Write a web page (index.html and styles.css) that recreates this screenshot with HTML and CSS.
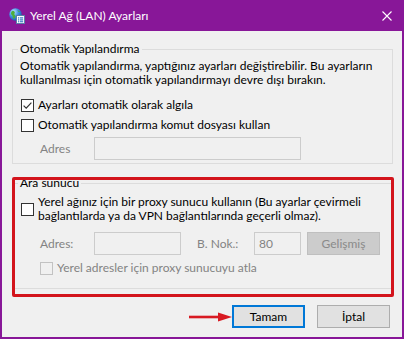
FILE: index.html
```html
<!DOCTYPE html>
<html lang="tr">
<head>
<meta charset="utf-8">
<title>Yerel Ağ (LAN) Ayarları</title>
<link rel="stylesheet" href="styles.css">
</head>
<body>
<div class="window">
  <div class="titlebar">
    <svg class="app-icon" viewBox="0 0 16 16" aria-hidden="true">
      <defs>
        <radialGradient id="gl" cx="0.35" cy="0.3" r="0.8">
          <stop offset="0" stop-color="#bfe6ff"/>
          <stop offset="0.5" stop-color="#3d8fe0"/>
          <stop offset="1" stop-color="#164f9e"/>
        </radialGradient>
      </defs>
      <circle cx="6.5" cy="6.5" r="6.2" fill="url(#gl)"/>
      <path d="M3 3.2c1.2-.6 2.4-.2 2.8.8.3.9-.6 1.4-.4 2.4.2.9 1.3 1 1.1 2.1-.2.9-1 1.6-1.6 2.4-.9-.4-1.3-1.4-1.2-2.4.1-.9-.8-1.3-1.4-2C1.7 5.6 2.2 3.7 3 3.2z" fill="#4caf3a"/>
      <path d="M8.5 2.2c1 .2 2 .9 2.6 1.8-.6.3-1.4 0-1.8-.5-.3-.4-.8-.6-.8-1.3z" fill="#4caf3a"/>
      <rect x="7.5" y="7.5" width="8" height="8" fill="#ffffff" stroke="#5a7fa8" stroke-width="1"/>
      <rect x="9" y="9.3" width="1.3" height="1.2" fill="#2a6fc4"/>
      <rect x="11" y="9.3" width="3.2" height="1.2" fill="#2a6fc4"/>
      <rect x="9" y="11.3" width="1.3" height="1.2" fill="#2a6fc4"/>
      <rect x="11" y="11.3" width="3.2" height="1.2" fill="#2a6fc4"/>
      <rect x="9" y="13.2" width="1.3" height="1.1" fill="#2a6fc4"/>
      <rect x="11" y="13.2" width="3.2" height="1.1" fill="#2a6fc4"/>
    </svg>
    <span class="title">Yerel Ağ (LAN) Ayarları</span>
    <svg class="close" viewBox="0 0 10 10" aria-hidden="true">
      <path d="M0.5 0.5L9.5 9.5M9.5 0.5L0.5 9.5" stroke="#ffffff" stroke-width="1.1" fill="none"/>
    </svg>
  </div>
  <div class="client">
    <fieldset class="group g1">
      <legend>Otomatik Yapılandırma</legend>
      <p class="desc">Otomatik yapılandırma, yaptığınız ayarları değiştirebilir. Bu ayarların<br>kullanılması için otomatik yapılandırmayı devre dışı bırakın.</p>
      <label class="check first">
        <span class="box">
          <svg viewBox="0 0 11 11" aria-hidden="true"><path d="M1.6 5.6L4.2 8.2L9.4 2.6" stroke="#333" stroke-width="1.2" fill="none"/></svg>
        </span>
        <span>Ayarları otomatik olarak algıla</span>
      </label>
      <label class="check">
        <span class="box"></span>
        <span>Otomatik yapılandırma komut dosyası kullan</span>
      </label>
      <div class="field-row">
        <span class="lbl lbl-addr">Adres</span>
        <span class="input input-script"></span>
      </div>
    </fieldset>

    <fieldset class="group g2">
      <legend>Ara sunucu</legend>
      <label class="check multi">
        <span class="box"></span>
        <span>Yerel ağınız için bir proxy sunucu kullanın (Bu ayarlar çevirmeli<br>bağlantılarda ya da VPN bağlantılarında geçerli olmaz).</span>
      </label>
      <div class="field-row proxy-row">
        <span class="lbl lbl-addr">Adres:</span>
        <span class="input input-proxy"></span>
        <span class="lbl lbl-port">B. Nok.:</span>
        <span class="input input-port">80</span>
        <span class="btn btn-disabled">Gelişmiş</span>
      </div>
      <label class="check disabled">
        <span class="box"></span>
        <span>Yerel adresler için proxy sunucuyu atla</span>
      </label>
    </fieldset>

    <div class="buttons">
      <span class="btn btn-default">Tamam</span>
      <span class="btn">İptal</span>
    </div>

    <div class="highlight"></div>
    <svg class="arrow" viewBox="0 0 44 12" aria-hidden="true">
      <path d="M0 6H32" stroke="#d81a22" stroke-width="2.6"/>
      <path d="M29 1.5L43 6L29 10.5Z" fill="#d81a22"/>
    </svg>
  </div>
</div>
</body>
</html>
```

FILE: styles.css
```css
* { box-sizing: border-box; }

html, body {
  margin: 0;
  padding: 0;
}

body {
  width: 404px;
  height: 340px;
  overflow: hidden;
  background: #ffffff;
  font-family: Lato, "Liberation Sans", sans-serif;
  font-size: 12px;
  line-height: 14px;
  color: #000000;
  white-space: nowrap;
}

.window {
  width: 404px;
  height: 339px;
  display: flex;
  flex-direction: column;
  background: #881798;
}

.titlebar {
  height: 31px;
  flex: none;
  display: flex;
  align-items: center;
  padding-left: 9px;
  color: #ffffff;
}

.app-icon {
  width: 16px;
  height: 16px;
  margin-right: 5px;
  flex: none;
}

.title {
  flex: 1;
  font-size: 12px;
}

.close {
  width: 10px;
  height: 10px;
  margin-right: 12px;
}

.client {
  position: relative;
  flex: 1;
  margin: 0 2px 2px 2px;
  background: #f0f0f0;
  padding: 10px 9px 0 10px;
}

.group {
  margin: 0;
  min-width: 0;
  border: 1px solid #dcdcdc;
  padding: 2px 8px 3px 7px;
}

.group legend {
  padding: 0 2px;
  margin-left: -2px;
  line-height: 16px;
}

.g2 {
  margin-top: 11px;
  padding-top: 4px;
  padding-bottom: 10px;
}

.desc {
  margin: 0;
  line-height: 14px;
}

.check {
  display: flex;
  align-items: center;
  gap: 4px;
  height: 20px;
  margin-left: 1px;
}

.check.first {
  margin-top: 8px;
}

.check.multi {
  height: auto;
  line-height: 14px;
}

.check.disabled {
  margin-left: 20px;
  margin-top: 3px;
  color: #838383;
}

.box {
  width: 13px;
  height: 13px;
  flex: none;
  border: 1px solid #333333;
  background: #ffffff;
  display: flex;
}

.box svg {
  width: 11px;
  height: 11px;
}

.check.disabled .box {
  border-color: #c2c2c2;
  background: #f0f0f0;
}

.field-row {
  display: flex;
  align-items: center;
  height: 23px;
  margin-top: 2px;
}

.proxy-row {
  margin-top: 9px;
}

.lbl {
  color: #838383;
  flex: none;
}

.lbl-addr {
  margin-left: 20px;
  width: 54px;
}

.lbl-port {
  margin-left: 16px;
  width: 57px;
}

.input {
  height: 23px;
  border: 1px solid #cccccc;
  background: #f0f0f0;
  flex: none;
  color: #838383;
  line-height: 21px;
  padding-left: 4px;
}

.input-script { width: 207px; }
.input-proxy { width: 87px; }
.input-port { width: 47px; }

.btn {
  width: 73px;
  height: 23px;
  flex: none;
  border: 1px solid #adadad;
  background: #e1e1e1;
  display: flex;
  align-items: center;
  justify-content: center;
  color: #000000;
}

.btn-disabled {
  margin-left: 6px;
  background: #cccccc;
  border-color: #bfbfbf;
  color: #8a8a8a;
}

.btn-default {
  border: 2px solid #0078d7;
}

.buttons {
  display: flex;
  justify-content: flex-end;
  gap: 12px;
  margin-top: 16px;
  padding-right: 3px;
}

.highlight {
  position: absolute;
  left: 10px;
  top: 146px;
  width: 382px;
  height: 120px;
  border: 3px solid #d3141c;
  border-radius: 2px;
}

.arrow {
  position: absolute;
  left: 187px;
  top: 280px;
  width: 44px;
  height: 12px;
}
```
